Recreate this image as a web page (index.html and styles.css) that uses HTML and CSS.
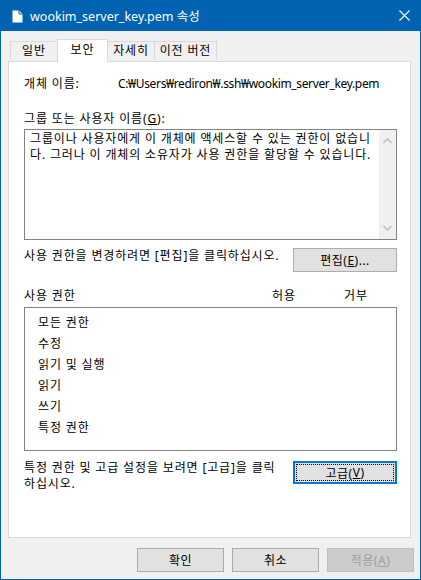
FILE: index.html
```html
<!DOCTYPE html>
<html lang="ko">
<head>
    <meta charset="UTF-8">
    <title>wookim_server_key.pem 속성</title>
    <link rel="stylesheet" href="styles.css">
</head>
<body>
    <div class="window">
        <div class="titlebar">
            <svg class="file-icon" width="11" height="13" viewBox="0 0 11 13">
                <path d="M0.5 0.5 H7 L10.5 4 V12.5 H0.5 Z" fill="#fff"/>
                <path d="M7 0.5 V4 H10.5" fill="none" stroke="#0063b1" stroke-width="1"/>
            </svg>
            <span class="title">wookim_server_key.pem 속성</span>
            <svg class="close" width="11" height="11" viewBox="0 0 11 11">
                <path d="M0.5 0.5 L10.5 10.5 M10.5 0.5 L0.5 10.5" stroke="#fff" stroke-width="1.1"/>
            </svg>
        </div>

        <div class="tabs">
            <div class="tab">일반</div>
            <div class="tab active">보안</div>
            <div class="tab">자세히</div>
            <div class="tab">이전 버전</div>
        </div>

        <div class="panel">
            <div class="object-row">
                <span class="object-label">개체 이름:</span>
                <span class="path">C:₩Users₩rediron₩.ssh₩wookim_server_key.pem</span>
            </div>

            <div class="caption">그룹 또는 사용자 이름(<u>G</u>):</div>
            <div class="listbox users">
                <div class="users-text">그룹이나 사용자에게 이 개체에 액세스할 수 있는 권한이 없습니<br>다. 그러나 이 개체의 소유자가 사용 권한을 할당할 수 있습니다.</div>
                <div class="scrollbar">
                    <svg width="9" height="6" viewBox="0 0 9 6"><path d="M0.5 5 L4.5 1 L8.5 5" fill="none" stroke="#c2c2c2" stroke-width="1.6"/></svg>
                    <svg width="9" height="6" viewBox="0 0 9 6"><path d="M0.5 1 L4.5 5 L8.5 1" fill="none" stroke="#c2c2c2" stroke-width="1.6"/></svg>
                </div>
            </div>

            <div class="action-row">
                <p>사용 권한을 변경하려면 [편집]을 클릭하십시오.</p>
                <button class="btn">편집(<u>E</u>)...</button>
            </div>

            <div class="perm-head">
                <span class="perm-name">사용 권한</span>
                <span class="perm-allow">허용</span>
                <span>거부</span>
            </div>
            <ul class="listbox perms">
                <li>모든 권한</li>
                <li>수정</li>
                <li>읽기 및 실행</li>
                <li>읽기</li>
                <li>쓰기</li>
                <li>특정 권한</li>
            </ul>

            <div class="action-row advanced">
                <p>특정 권한 및 고급 설정을 보려면 [고급]을 클릭<br>하십시오.</p>
                <button class="btn focused"><span>고급(<u>V</u>)</span></button>
            </div>
        </div>

        <div class="footer">
            <button class="btn">확인</button>
            <button class="btn">취소</button>
            <button class="btn" disabled>적용(<u>A</u>)</button>
        </div>
    </div>
</body>
</html>
```

FILE: styles.css
```css
body { margin: 0; background: #fff; font-family: "Noto Sans", "Noto Sans CJK KR", sans-serif; font-size: 12px; color: #000; letter-spacing: 0.85px; }
u { text-decoration: underline; text-underline-offset: 1px; }

.window { width: 421px; height: 580px; box-sizing: border-box; background: #f0f0f0; border: 1px solid #0063b1; border-top: none; }

.titlebar { height: 31px; background: #0063b1; display: flex; align-items: center; padding: 0 10px 0 11px; color: #fff; letter-spacing: 0; }
.file-icon { display: block; margin-top: 1px; }
.title { margin-left: 7px; font-size: 12.5px; flex: 1; }
.close { display: block; }

.tabs { display: flex; height: 22px; padding-left: 9px; margin-top: 8px; }
.tab { height: 19px; margin-top: 2px; box-sizing: border-box; border: 1px solid #d9d9d9; border-bottom: none; border-right: none; line-height: 18px; text-align: center; white-space: nowrap; }
.tab:nth-child(1) { width: 47px; }
.tab:nth-child(3) { width: 46px; border-left: none; }
.tab:nth-child(4) { width: 63px; border-right: 1px solid #d9d9d9; }
.tab.active { width: 51px; height: 23px; margin-top: 0; background: #fff; border-right: 1px solid #d9d9d9; position: relative; z-index: 1; line-height: 19px; }

.panel { margin-left: 7px; width: 403px; height: 477px; box-sizing: border-box; background: #fff; border: 1px solid #d9d9d9; padding: 0 12px 0 15px; }

.object-row { margin-top: 14px; line-height: 15px; display: flex; }
.object-label { width: 94px; }
.path { letter-spacing: -0.35px; }

.caption { margin-top: 20px; line-height: 15px; }

.listbox { border: 1px solid #828282; box-sizing: border-box; width: 373px; margin: 0; }
.users { margin-top: 3px; height: 111px; display: flex; justify-content: space-between; }
.users-text { padding: 1px 0 0 5px; line-height: 16px; white-space: nowrap; }
.scrollbar { width: 17px; background: #f0f0f0; display: flex; flex-direction: column; justify-content: space-between; align-items: center; padding: 8px 0 8px; }
.scrollbar svg { display: block; }

.action-row { display: flex; justify-content: space-between; align-items: flex-start; margin-top: 8px; width: 373px; }
.action-row p { margin: 0; line-height: 15px; white-space: nowrap; }
.btn { font: inherit; letter-spacing: 0.5px; color: #000; background: #e1e1e1; border: 1px solid #adadad; height: 24px; padding: 0; cursor: pointer; }
.action-row .btn { width: 104px; }
.btn:disabled { background: #cccccc; border-color: #bfbfbf; color: #a0a0a0; }
.btn.focused { border: 2px solid #0078d7; padding: 1px; }
.btn.focused span { display: flex; align-items: center; justify-content: center; height: 100%; outline: 1px dotted #000; outline-offset: -1px; }

.perm-head { display: flex; margin-top: 16px; line-height: 15px; }
.perm-name { width: 248px; }
.perm-allow { width: 72px; }

.perms { list-style: none; margin-top: 4px; height: 144px; padding: 4px 0 0 13px; }
.perms li { line-height: 21px; }

.advanced { margin-top: 9px; }
.advanced p { line-height: 15.5px; }
.advanced .btn { margin-top: 1px; height: 23px; }

.footer { display: flex; justify-content: flex-end; gap: 8px; padding-right: 6px; margin-top: 10px; }
.footer .btn { width: 87px; }
```
